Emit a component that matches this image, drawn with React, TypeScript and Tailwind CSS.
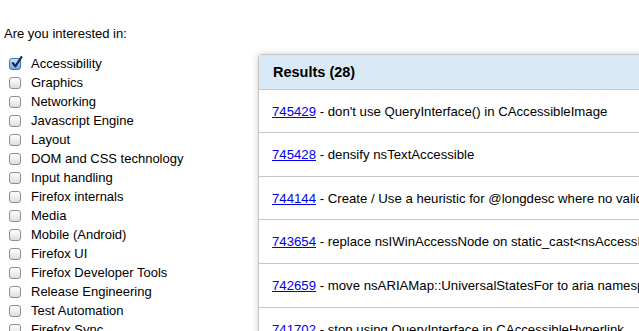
import React from "react";

const topics = [
  { name: "Accessibility", checked: true },
  { name: "Graphics" },
  { name: "Networking" },
  { name: "Javascript Engine" },
  { name: "Layout" },
  { name: "DOM and CSS technology" },
  { name: "Input handling" },
  { name: "Firefox internals" },
  { name: "Media" },
  { name: "Mobile (Android)" },
  { name: "Firefox UI" },
  { name: "Firefox Developer Tools" },
  { name: "Release Engineering" },
  { name: "Test Automation" },
  { name: "Firefox Sync" },
];

const results = [
  { id: "745429", title: "don't use QueryInterface() in CAccessibleImage", h: "h-[43px]" },
  { id: "745428", title: "densify nsTextAccessible", h: "h-[44px]" },
  { id: "744144", title: "Create / Use a heuristic for @longdesc where no valid URL is provided", h: "h-[43px]" },
  { id: "743654", title: "replace nsIWinAccessNode on static_cast<nsAccessNodeWrap*>", h: "h-[44px]" },
  { id: "742659", title: "move nsARIAMap::UniversalStatesFor to aria namespace", h: "h-[44px]" },
  { id: "741702", title: "stop using QueryInterface in CAccessibleHyperlink", h: "h-[44px]" },
];

function Checkbox({ checked }: { checked?: boolean }) {
  if (checked) {
    return (
      <span className="relative w-[12px] h-[12px] rounded-[3px] border border-[#3a6fb0] bg-gradient-to-b from-[#cfe3fb] to-[#6aa6ec] shrink-0">
        <svg viewBox="0 0 12 12" className="absolute -top-[3px] left-[0px] w-[13px] h-[13px]">
          <path d="M2.5 6.5 L5 9.5 L10.5 1" fill="none" stroke="#1b2a3d" strokeWidth="2" strokeLinecap="round" strokeLinejoin="round" />
        </svg>
      </span>
    );
  }
  return (
    <span className="w-[12px] h-[12px] rounded-[3px] border border-[#8e8e8e] bg-gradient-to-b from-[#ffffff] to-[#dedede] shrink-0" />
  );
}

export default function App() {
  return (
    <div className="w-[639px] h-[331px] overflow-hidden bg-white text-black font-['Liberation_Sans',Arial,sans-serif] text-[13px] leading-[19px]">
      <p className="pt-[24px] pl-[4px]">Are you interested in:</p>

      <div className="flex items-start mt-[11px]">
        <ul className="w-[258px] shrink-0">
          {topics.map((t) => (
            <li key={t.name} className="flex items-center h-[19px] pl-[9px]">
              <Checkbox checked={t.checked} />
              <span className="ml-[10px]">{t.name}</span>
            </li>
          ))}
        </ul>

        <div className="w-[420px] shrink-0 rounded-[4px] border border-[#c6c6c6] shadow-[0_0_7px_rgba(0,0,0,0.18)] overflow-hidden">
          <div className="h-[35px] flex items-center px-[14px] bg-[#d9eaf6] border-b border-[#c6c6c6] font-bold text-[14.5px]">
            Results (28)
          </div>
          {results.map((r) => (
            <div key={r.id} className={`${r.h} flex items-center px-[13px] border-b border-[#c6c6c6] whitespace-nowrap text-[13.2px]`}>
              <a href="#" className="text-[#0000ee] underline">{r.id}</a>
              <span>&nbsp;- {r.title}</span>
            </div>
          ))}
        </div>
      </div>
    </div>
  );
}
